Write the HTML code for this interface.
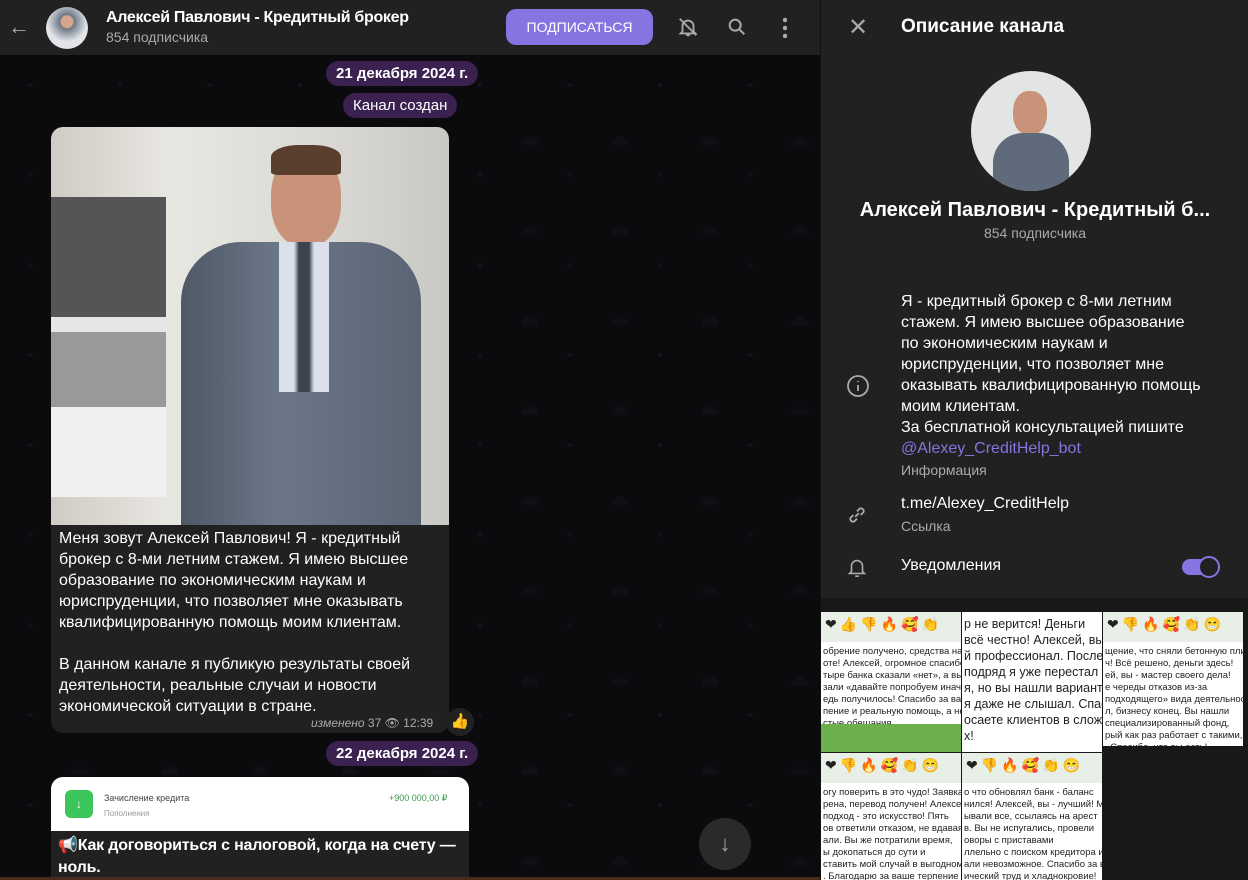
<!DOCTYPE html>
<html><head><meta charset="utf-8"><style>
*{margin:0;padding:0;box-sizing:border-box}
body{width:1248px;height:880px;overflow:hidden;background:#0e0e0e;font-family:"Liberation Sans",sans-serif;color:#fff;position:relative}
.abs{position:absolute}
.chat{left:0;top:55px;width:820px;height:825px;background:#0b0a0d;background-image:radial-gradient(circle at 30px 30px,rgba(110,70,150,.12) 1.5px,transparent 2.5px),radial-gradient(circle at 80px 90px,rgba(110,70,150,.07) 8px,transparent 9px);background-size:90px 90px}
.hdr{left:0;top:0;width:820px;height:55px;background:#212121}
.pill{background:#3a2150;border-radius:14px;font-weight:bold;font-size:15px;padding:4px 10px;color:#fff}
.rp{left:820px;top:0;width:428px;height:880px;background:#212121;border-left:1px solid #111}
.txt{font-size:16px;line-height:21px}
.g{color:#aaa}
.cell{position:absolute;width:140px;height:140px;background:#fff;overflow:hidden;color:#222;font-size:9.5px;line-height:12px;white-space:nowrap}
.cell .em{height:30px;background:#e8efe6;font-size:14px;padding:6px 4px;letter-spacing:3px}
</style></head><body>
<div class="abs chat"></div>
<div class="abs hdr">
 <div class="abs" style="left:8px;top:14px;font-size:22px;color:#aaa">←</div>
 <div class="abs" style="left:46px;top:7px;width:42px;height:42px;border-radius:50%;background:radial-gradient(circle at 50% 35%,#d6a78c 0 6px,#6b7785 7px,#e2e4e8 20px)"></div>
 <div class="abs" style="left:106px;top:9px;font-weight:bold;font-size:16px;letter-spacing:-0.3px">Алексей Павлович - Кредитный брокер</div>
 <div class="abs g" style="left:106px;top:29px;font-size:14px">854 подписчика</div>
 <div class="abs" style="left:506px;top:9px;width:147px;height:36px;border-radius:10px;background:#8774e1;font-size:14px;text-align:center;line-height:36px">ПОДПИСАТЬСЯ</div>
 <svg class="abs" style="left:677px;top:16px" width="22" height="22" viewBox="0 0 24 24" fill="none" stroke="#aaa" stroke-width="2"><path d="M6 17V11a6 6 0 0112 0v6l2 2H4zM10 21h4M3 3l18 18"/></svg>
 <svg class="abs" style="left:726px;top:16px" width="22" height="22" viewBox="0 0 24 24" fill="none" stroke="#aaa" stroke-width="2.2"><circle cx="10" cy="10" r="6"/><path d="M15 15l5 5"/></svg>
 <div class="abs" style="left:783px;top:16px;width:4px;height:22px;background:radial-gradient(circle,#aaa 2px,transparent 2.5px) 0 0/4px 8px"></div>
</div>
<div class="abs pill" style="left:326px;top:61px">21 декабря 2024 г.</div>
<div class="abs pill" style="left:343px;top:93px;font-weight:normal">Канал создан</div>
<div class="abs" style="left:51px;top:127px;width:398px;height:606px;border-radius:12px;overflow:hidden;background:#212121">
 <div class="abs" style="left:0;top:0;width:398px;height:398px;background:linear-gradient(90deg,#cfcbc4 0,#e9e7e2 30%,#d9d8d4 70%,#c9c8c4 100%)">
  <div class="abs" style="left:0;top:70px;width:115px;height:300px;background:linear-gradient(#555 0 40%,#e6e6e6 40% 45%,#999 45% 70%,#f0f0f0 70%)"></div>
  <div class="abs" style="left:220px;top:25px;width:70px;height:95px;border-radius:45%;background:#c99379"></div>
  <div class="abs" style="left:220px;top:18px;width:70px;height:30px;border-radius:40% 40% 10% 10%;background:#5a3e2e"></div>
  <div class="abs" style="left:130px;top:115px;width:240px;height:283px;border-radius:60px 60px 0 0;background:linear-gradient(90deg,#4e5866,#6b7787 40%,#5a6574)"></div>
  <div class="abs" style="left:228px;top:115px;width:50px;height:150px;background:linear-gradient(90deg,#d9e0ea 30%,#3c4250 40% 60%,#d9e0ea 70%)"></div>
 </div>
 <div class="abs txt" style="left:8px;top:401px;width:370px">Меня зовут Алексей Павлович! Я - кредитный брокер с 8-ми летним стажем. Я имею высшее образование по экономическим наукам и юриспруденции, что позволяет мне оказывать квалифицированную помощь моим клиентам.<br><br>В данном канале я публикую результаты своей деятельности, реальные случаи и новости экономической ситуации в стране.</div>
 <div class="abs g" style="left:260px;top:589px;font-size:12px"><i>изменено</i> 37 👁 12:39</div>
</div>
<div class="abs" style="left:446px;top:708px;width:28px;height:28px;border-radius:50%;background:#212121;font-size:15px;text-align:center;line-height:28px">👍</div>
<div class="abs pill" style="left:326px;top:741px">22 декабря 2024 г.</div>
<div class="abs" style="left:51px;top:777px;width:418px;height:103px;border-radius:12px 12px 0 0;overflow:hidden;background:#212121">
 <div class="abs" style="left:0;top:0;width:418px;height:54px;background:#fff">
  <div class="abs" style="left:14px;top:13px;width:28px;height:28px;border-radius:6px;background:#3cc55a;color:#fff;text-align:center;line-height:28px;font-size:12px">↓</div>
  <div class="abs" style="left:53px;top:16px;font-size:9px;color:#444">Зачисление кредита</div>
  <div class="abs" style="left:53px;top:32px;font-size:8px;color:#999">Пополнения</div>
  <div class="abs" style="left:338px;top:16px;font-size:9px;color:#3a9a4a">+900 000,00 ₽</div>
 </div>
 <div class="abs" style="left:7px;top:58px;font-size:16px;font-weight:bold;line-height:22px;width:410px;letter-spacing:-0.2px">📢Как договориться с налоговой, когда на счету — ноль.</div>
</div>
<div class="abs" style="left:699px;top:818px;width:52px;height:52px;border-radius:50%;background:#2a2a2a;color:#aaa;font-size:22px;text-align:center;line-height:52px">↓</div>
<div class="abs" style="left:0;top:877px;width:1248px;height:3px;background:#4a2a1a"></div>

<div class="abs rp">
 <div class="abs" style="left:27px;top:13px;font-size:24px;color:#aaa">✕</div>
 <div class="abs" style="left:80px;top:16px;font-size:19px;font-weight:bold">Описание канала</div>
 <div class="abs" style="left:150px;top:71px;width:120px;height:120px;border-radius:50%;overflow:hidden;background:#e3e4e6">
  <div class="abs" style="left:42px;top:20px;width:34px;height:44px;border-radius:45%;background:#c99379"></div>
  <div class="abs" style="left:22px;top:62px;width:76px;height:70px;border-radius:30px 30px 0 0;background:#5f6b7a"></div>
 </div>
 <div class="abs" style="left:0;top:199px;width:428px;text-align:center;font-size:20px;font-weight:bold">Алексей Павлович - Кредитный б...</div>
 <div class="abs g" style="left:0;top:225px;width:428px;text-align:center;font-size:14px">854 подписчика</div>
 <div class="abs txt" style="left:80px;top:291px;width:300px">Я - кредитный брокер с 8-ми летним стажем. Я имею высшее образование по экономическим наукам и юриспруденции, что позволяет мне оказывать квалифицированную помощь моим клиентам.<br>За бесплатной консультацией пишите<br><span style="color:#8774e1">@Alexey_CreditHelp_bot</span></div>
 <div class="abs g" style="left:80px;top:462px;font-size:14px">Информация</div>
 <svg class="abs" style="left:25px;top:374px" width="24" height="24" viewBox="0 0 24 24" fill="none" stroke="#aaa" stroke-width="1.8"><circle cx="12" cy="12" r="10"/><path d="M12 11v6M12 7v1"/></svg>
 <div class="abs txt" style="left:80px;top:493px">t.me/Alexey_CreditHelp</div>
 <div class="abs g" style="left:80px;top:518px;font-size:14px">Ссылка</div>
 <svg class="abs" style="left:25px;top:504px" width="22" height="22" viewBox="0 0 24 24" fill="none" stroke="#aaa" stroke-width="2"><path d="M10 14l4-4M8 12l-3 3a3 3 0 004 4l3-3M16 12l3-3a3 3 0 00-4-4l-3 3"/></svg>
 <svg class="abs" style="left:25px;top:555px" width="22" height="24" viewBox="0 0 24 24" fill="none" stroke="#aaa" stroke-width="1.8"><path d="M6 17V11a6 6 0 0112 0v6l2 2H4zM10 22h4"/></svg>
 <div class="abs" style="left:80px;top:557px;font-size:16px">Уведомления</div>
 <div class="abs" style="left:361px;top:559px;width:34px;height:16px;border-radius:8px;background:#8774e1"></div>
 <div class="abs" style="left:377px;top:556px;width:22px;height:22px;border-radius:50%;background:#212121;border:2px solid #8774e1"></div>
 <div class="abs" style="left:0;top:598px;width:428px;height:282px;background:#181818"></div>
 <div class="cell" style="left:0;top:612px"><div class="em">❤👍👎🔥🥰👏</div><div style="padding:4px 2px">обрение получено, средства на<br>оте! Алексей, огромное спасибо!<br>тыре банка сказали «нет», а вы<br>зали «давайте попробуем иначе».<br>едь получилось! Спасибо за ваше<br>пение и реальную помощь, а не<br>стые обещания.</div><div style="position:absolute;left:0;bottom:0;width:140px;height:28px;background:#6bb04a"></div></div>
 <div class="cell" style="left:141px;top:612px;font-size:12.5px;line-height:16px;padding:4px 2px">р не верится! Деньги<br>всё честно! Алексей, вы<br>й профессионал. После<br>подряд я уже перестал<br>я, но вы нашли вариант, с<br>я даже не слышал. Спаси<br>осаете клиентов в сложн<br>х!</div>
 <div class="cell" style="left:282px;top:612px;height:134px"><div class="em">❤👎🔥🥰👏😁</div><div style="padding:4px 2px">щение, что сняли бетонную плиту<br>ч! Всё решено, деньги здесь!<br>ей, вы - мастер своего дела!<br>е череды отказов из-за<br>подходящего» вида деятельности<br>л, бизнесу конец. Вы нашли<br>специализированный фонд,<br>рый как раз работает с такими,<br>. Спасибо, что вы есть!</div></div>
 <div class="cell" style="left:0;top:753px;height:127px"><div class="em">❤👎🔥🥰👏😁</div><div style="padding:4px 2px">огу поверить в это чудо! Заявка<br>рена, перевод получен! Алексей,<br>подход - это искусство! Пять<br>ов ответили отказом, не вдаваясь<br>али. Вы же потратили время,<br>ы докопаться до сути и<br>ставить мой случай в выгодном<br>. Благодарю за ваше терпение и</div></div>
 <div class="cell" style="left:141px;top:753px;height:127px"><div class="em">❤👎🔥🥰👏😁</div><div style="padding:4px 2px">о что обновлял банк - баланс<br>нился! Алексей, вы - лучший! Мне<br>ывали все, ссылаясь на арест<br>в. Вы не испугались, провели<br>оворы с приставами<br>ллельно с поиском кредитора и<br>али невозможное. Спасибо за ваш<br>ический труд и хладнокровие!</div></div>
</div>
</body></html>
